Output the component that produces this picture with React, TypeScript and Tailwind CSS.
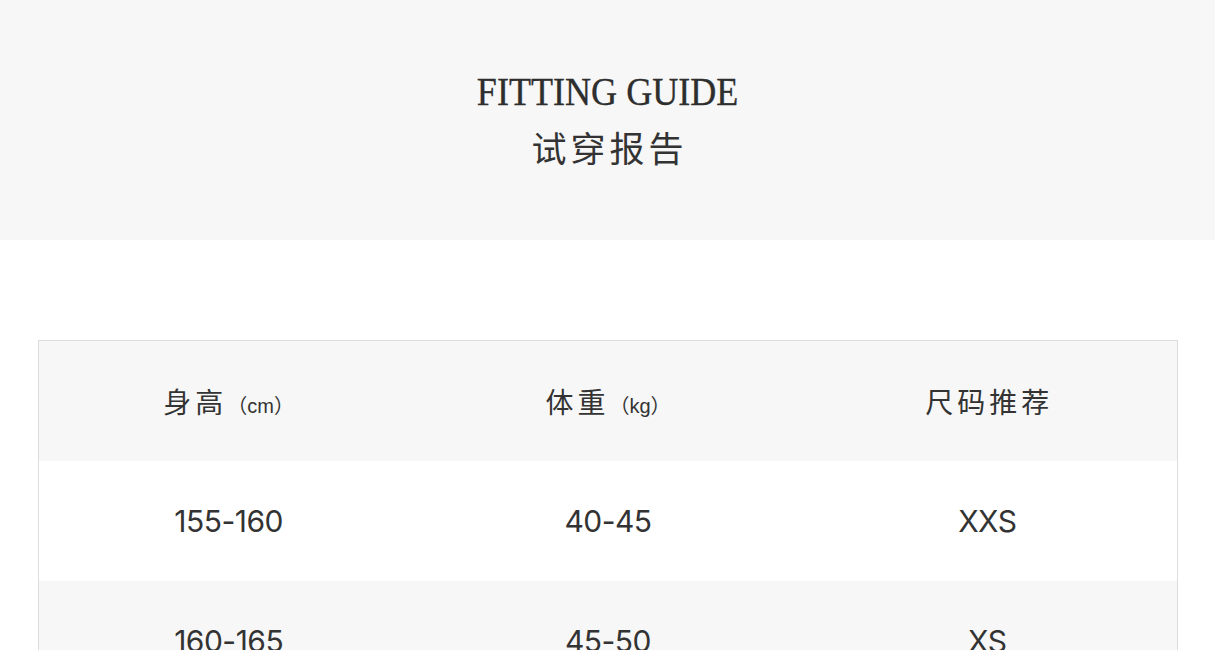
// 试穿报告：尺码推荐表
const ROWS = [
  { height: '155-160', weight: '40-45', size: 'XXS' },
  { height: '160-165', weight: '45-50', size: 'XS' },
  { height: '165-170', weight: '50-55', size: 'S' },
]

const cjk = "font-['Noto_Sans_CJK_SC','Noto_Sans',sans-serif]"

export default function App() {
  return (
    <div className="min-h-screen bg-white text-[#333]">
      {/* タイトル */}
      <div className="flex h-[240px] flex-col items-center bg-[#f7f7f7] pt-[66px]">
        <h1 className="scale-x-[0.88] font-['Liberation_Serif',serif] text-[41px] leading-[50px] text-[#2e2e2e] [-webkit-text-stroke:0.35px_#2e2e2e]">
          FITTING GUIDE
        </h1>
        <h2 className={`${cjk} mt-[6px] text-[35px] leading-[50px] font-normal tracking-[4px] pl-[4px] text-[#333]`}>
          试穿报告
        </h2>
      </div>

      {/* 表 */}
      <div className="mx-[38px] mt-[100px] w-[1140px] border border-[#dddddd]">
        <div className="grid h-[120px] grid-cols-3 items-center bg-[#f7f7f7] text-center">
          <div className={`${cjk} text-[28px] tracking-[4px]`}>
            身高<span className="font-['Liberation_Sans','Noto_Sans_CJK_SC',sans-serif] text-[20px] tracking-normal">（cm）</span>
          </div>
          <div className={`${cjk} text-[28px] tracking-[4px]`}>
            体重<span className="font-['Liberation_Sans','Noto_Sans_CJK_SC',sans-serif] text-[20px] tracking-normal">（kg）</span>
          </div>
          <div className={`${cjk} text-[28px] tracking-[4px] pl-[4px]`}>尺码推荐</div>
        </div>
        {ROWS.map((r, i) => (
          <div
            key={r.height}
            className={`grid h-[120px] grid-cols-3 items-center text-center font-['Inter',sans-serif] text-[30px] tracking-[-0.5px] ${
              i % 2 === 0 ? 'bg-white' : 'bg-[#f7f7f7]'
            }`}
          >
            <div>{r.height}</div>
            <div>{r.weight}</div>
            <div>{r.size}</div>
          </div>
        ))}
      </div>
    </div>
  )
}
